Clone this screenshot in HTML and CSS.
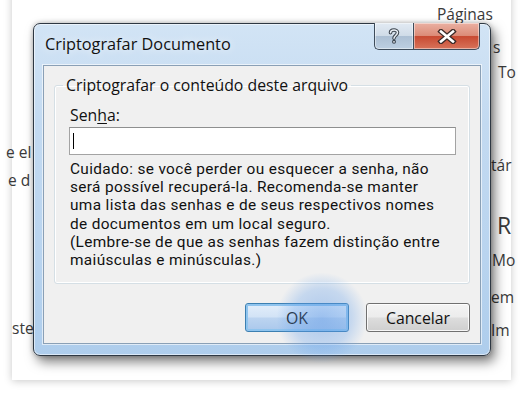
FILE: index.html
```html
<!DOCTYPE html>
<html lang="pt-BR">
<head>
<meta charset="utf-8">
<title>Criptografar Documento</title>
<link rel="stylesheet" href="styles.css">
</head>
<body>
<div class="page">
  <span class="bg bg-paginas">Páginas</span>
  <span class="bg bg-s">s</span>
  <span class="bg bg-to">To</span>
  <span class="bg bg-eel">e el</span>
  <span class="bg bg-ed">e d</span>
  <span class="bg bg-tar">tár</span>
  <span class="bg bg-r">R</span>
  <span class="bg bg-mo">Mo</span>
  <span class="bg bg-em">em</span>
  <span class="bg bg-im">Im</span>
  <span class="bg bg-ste">ste</span>
</div>

<div class="dialog">
  <div class="titlebar">
    <div class="title">Criptografar Documento</div>
    <div class="capbtns">
      <div class="capbtn help">
        <svg width="14" height="18" viewBox="0 0 14 18">
          <path d="M3.5 5.8 C3.5 2.2 10.5 2.2 10.5 5.6 C10.5 8.3 7 8.6 7 11.2" fill="none" stroke="#3d4650" stroke-width="3.6" stroke-linecap="round"/>
          <circle cx="7" cy="14.8" r="2" fill="#3d4650"/>
          <path d="M3.5 5.8 C3.5 2.2 10.5 2.2 10.5 5.6 C10.5 8.3 7 8.6 7 11.2" fill="none" stroke="#e9eef4" stroke-width="1.5" stroke-linecap="round"/>
          <circle cx="7" cy="14.8" r="0.9" fill="#e9eef4"/>
        </svg>
      </div>
      <div class="capbtn close">
        <svg width="20" height="15" viewBox="0 0 20 15">
          <path d="M4 2.5 L16 12.5 M16 2.5 L4 12.5" fill="none" stroke="#3b2a28" stroke-width="5.2" stroke-linecap="square"/>
          <path d="M4 2.5 L16 12.5 M16 2.5 L4 12.5" fill="none" stroke="#ffffff" stroke-width="2.6" stroke-linecap="square"/>
        </svg>
      </div>
    </div>
  </div>
  <div class="client">
    <fieldset class="group">
      <legend>Criptografar o conteúdo deste arquivo</legend>
      <div class="label">Sen<u>h</u>a:</div>
      <div class="input"><span class="caret"></span></div>
      <p class="note">Cuidado: se você perder ou esquecer a senha, não<br>será possível recuperá-la. Recomenda-se manter<br>uma lista das senhas e de seus respectivos nomes<br>de documentos em um local seguro.<br>(Lembre-se de que as senhas fazem distinção entre<br>maiúsculas e minúsculas.)</p>
    </fieldset>
    <div class="buttons">
      <button class="btn btn-ok">OK</button>
      <button class="btn">Cancelar</button>
    </div>
  </div>
</div>
</body>
</html>
```
FILE: styles.css
```css
html, body {
  margin: 0;
  padding: 0;
}
body {
  width: 526px;
  height: 404px;
  overflow: hidden;
  background: #ffffff;
  position: relative;
  font-family: "Open Sans", "Noto Sans", "DejaVu Sans", sans-serif;
}

.page {
  position: absolute;
  left: 12px;
  top: -20px;
  width: 499px;
  height: 400px;
  background: #ffffff;
  box-shadow: 0 1px 8px rgba(0, 0, 0, 0.22);
}
.bg {
  position: absolute;
  font-size: 15.5px;
  line-height: 20px;
  color: #3a3a3a;
  white-space: nowrap;
}
.bg-paginas { left: 425px; top: 24px; }
.bg-s { left: 481px; top: 57px; }
.bg-to { left: 486px; top: 82px; }
.bg-eel { left: -6px; top: 162px; }
.bg-ed { left: -4px; top: 190px; }
.bg-tar { left: 479px; top: 175px; }
.bg-r { left: 485px; top: 232px; font-size: 23px; line-height: 26px; }
.bg-mo { left: 480px; top: 270px; }
.bg-em { left: 479px; top: 307px; }
.bg-im { left: 479px; top: 340px; }
.bg-ste { left: 0px; top: 338px; }

.dialog {
  position: absolute;
  left: 33px;
  top: 23px;
  width: 458px;
  height: 333px;
  box-sizing: border-box;
  border: 1px solid #2e3843;
  border-radius: 7px;
  background: linear-gradient(to bottom, #d2e4f5 0%, #c3daf1 30%, #b9d4ef 70%, #aecdec 100%);
  box-shadow: inset 0 0 0 1px rgba(255, 255, 255, 0.55), 4px 6px 12px rgba(0, 0, 0, 0.5), 0 0 5px rgba(0, 0, 0, 0.25);
  display: flex;
  flex-direction: column;
}

.titlebar {
  height: 41px;
  display: flex;
  padding: 0 10px 0 11px;
  box-sizing: border-box;
}
.title {
  flex: 1;
  align-self: center;
  margin-top: -1px;
  font-size: 16.3px;
  color: #111;
  text-shadow: 0 0 8px rgba(255, 255, 255, 0.9);
  white-space: nowrap;
}
.capbtns {
  display: flex;
  margin-top: -1px;
  height: 27px;
}
.capbtn {
  box-sizing: border-box;
  height: 27px;
  border: 1px solid #3e4c5b;
  border-top: none;
  display: flex;
  align-items: center;
  justify-content: center;
  box-shadow: inset 0 0 0 1px rgba(255, 255, 255, 0.45);
}
.help {
  width: 39px;
  border-right: none;
  border-radius: 0 0 0 5px;
  background: linear-gradient(to bottom, #e2eaf3 0%, #d0dce8 48%, #adc0d4 52%, #bccfe2 100%);
}
.close {
  width: 67px;
  border-radius: 0 0 5px 0;
  background: linear-gradient(to bottom, #eab0a2 0%, #dc8c78 48%, #c84a32 52%, #d8735a 100%);
}

.client {
  flex: 1;
  margin: 0 9px 11px 9px;
  border: 1px solid #8aa0b6;
  background: #f0f0f0;
  padding: 9px 10px 0 10px;
  box-shadow: 0 0 0 1px rgba(255, 255, 255, 0.6);
}

.group {
  margin: 0;
  height: 209px;
  box-sizing: border-box;
  border: 1px solid #d5dfe5;
  border-radius: 3px;
  padding: 0 13px 0 14px;
  box-shadow: inset 0 0 0 1px #ffffff;
}
.group legend {
  font-size: 15.8px;
  line-height: 20px;
  color: #111;
  padding: 0 3px;
  margin-left: -6px;
  white-space: nowrap;
}
.label {
  margin-top: 10px;
  font-size: 15.8px;
  line-height: 20px;
  color: #111;
  padding-left: 1px;
}
.label u {
  text-underline-offset: 2px;
}
.input {
  margin-top: 2px;
  height: 28px;
  box-sizing: border-box;
  background: #ffffff;
  border: 1px solid #a3a3a3;
  border-top-color: #8e8f8f;
  display: flex;
  align-items: center;
  padding-left: 3px;
}
.caret {
  width: 1px;
  height: 16px;
  background: #000;
}
.note {
  margin: 5px 0 0 1px;
  font-family: Roboto, "Open Sans", sans-serif;
  font-size: 15.4px;
  letter-spacing: 0.35px;
  line-height: 18.2px;
  color: #111;
  white-space: nowrap;
}

.buttons {
  display: flex;
  justify-content: flex-end;
  gap: 17px;
  margin-top: 19px;
}
.btn {
  position: relative;
  width: 104px;
  height: 29px;
  box-sizing: border-box;
  border: 1px solid #707070;
  border-radius: 3px;
  background: linear-gradient(to bottom, #f4f4f4 0%, #ececec 48%, #dddddd 52%, #cfcfcf 100%);
  box-shadow: inset 0 0 0 1px rgba(255, 255, 255, 0.8);
  font-family: "Open Sans", "Noto Sans", "DejaVu Sans", sans-serif;
  font-size: 15.8px;
  color: #111;
  padding: 0;
}
.btn-ok {
  border-color: #3c7fb1;
  background: linear-gradient(to bottom, #e3eefa 0%, #d2e3f6 48%, #bcd4f0 52%, #aac8ec 100%);
  box-shadow: inset 0 0 0 2px #8fc4ee;
}
.btn-ok::after {
  content: "";
  position: absolute;
  left: 30px;
  top: -32px;
  width: 92px;
  height: 92px;
  border-radius: 50%;
  background: radial-gradient(circle, rgba(90, 150, 230, 0.45) 0%, rgba(100, 160, 235, 0.3) 45%, rgba(120, 175, 240, 0) 70%);
  pointer-events: none;
}
```
